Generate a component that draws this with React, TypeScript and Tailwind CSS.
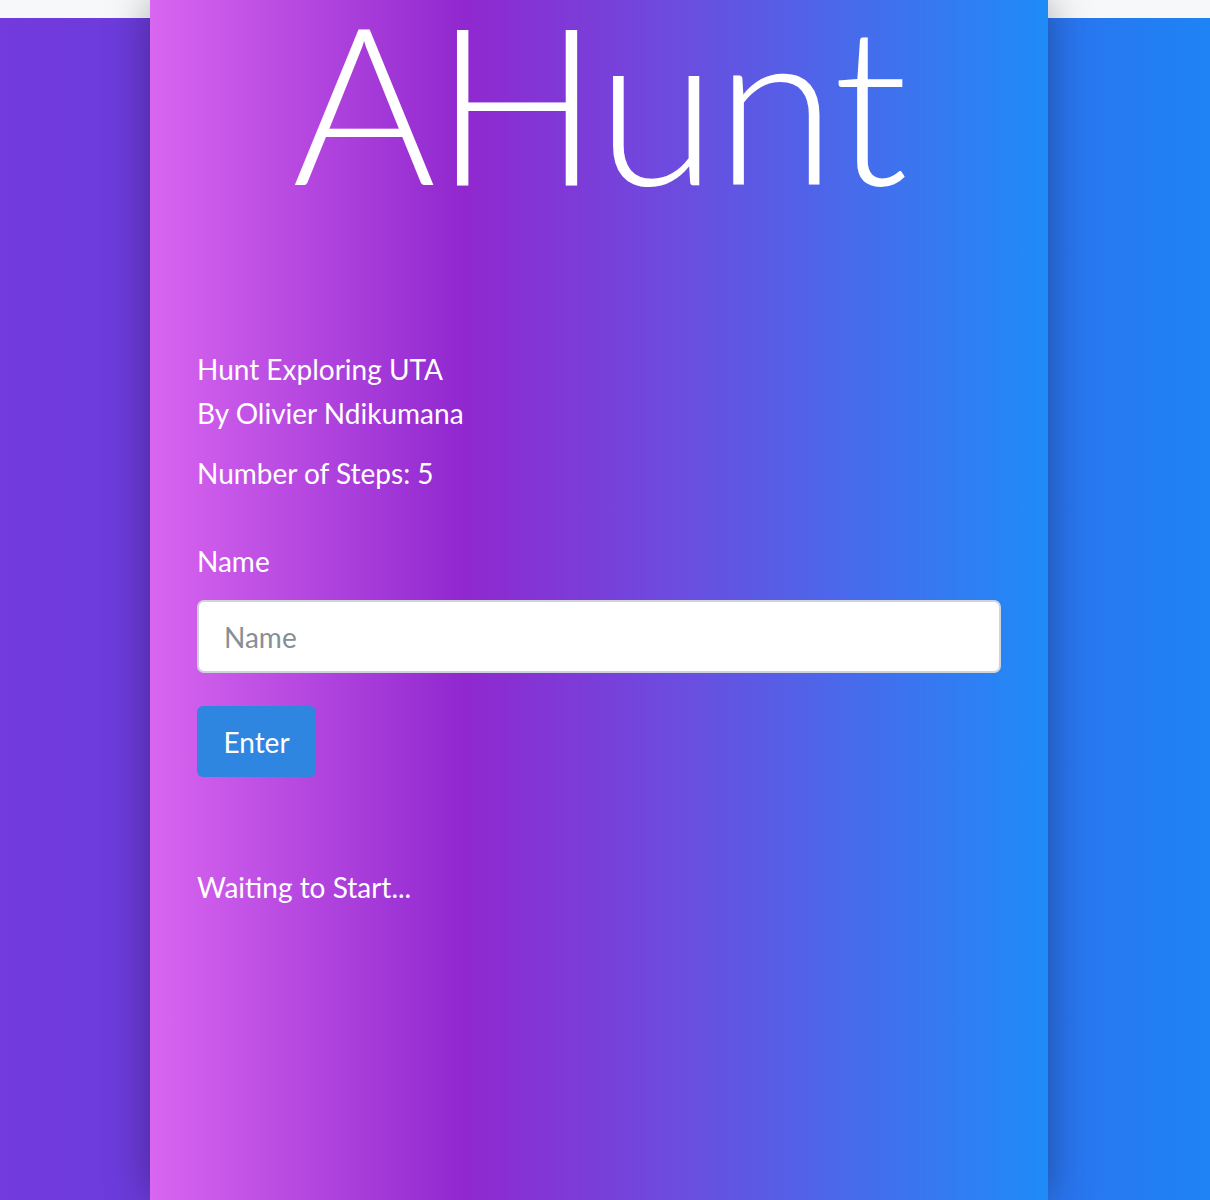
export default function App() {
  return (
    <div
      className="relative w-full min-h-[1200px] overflow-hidden bg-[linear-gradient(to_bottom,#f7f8fa_18px,transparent_18px),linear-gradient(to_right,#733adc,#5a3fdc_40%,#1e83f5)]"
      style={{ fontFamily: "Lato, 'Liberation Sans', sans-serif" }}
    >
      <div className="ml-[150px] w-[898px] min-h-[1200px] bg-[linear-gradient(to_right,#d966f0_0%,#9028cf_35%,#6a4ee0_60%,#1e8cf8_100%)] shadow-[0_0_40px_rgba(0,0,0,0.35)] text-white">
        <h1 className="text-center font-light text-[220px] leading-[200px] tracking-[-2px]">
          AHunt
        </h1>
        <div className="px-[47px] pt-[147px]">
          <div className="text-[28px] leading-[44px]">
            <div>Hunt Exploring UTA</div>
            <div>By Olivier Ndikumana</div>
          </div>
          <div className="text-[28px] leading-[44px] mt-[16px]">Number of Steps: 5</div>
          <div className="text-[28px] leading-[44px] mt-[44px]">Name</div>
          <input
            type="text"
            placeholder="Name"
            className="mt-[17px] block w-full h-[73px] rounded-[7px] border-2 border-[#ced4da] bg-white px-[25px] text-[28px] text-[#495057] placeholder:text-[#868e96] outline-none"
          />
          <button className="mt-[33px] block w-[119px] h-[71px] rounded-[6px] bg-[#2f86e0] text-white text-[28px]">
            Enter
          </button>
          <div className="text-[28px] leading-[44px] mt-[88px]">Waiting to Start...</div>
        </div>
      </div>
    </div>
  );
}
